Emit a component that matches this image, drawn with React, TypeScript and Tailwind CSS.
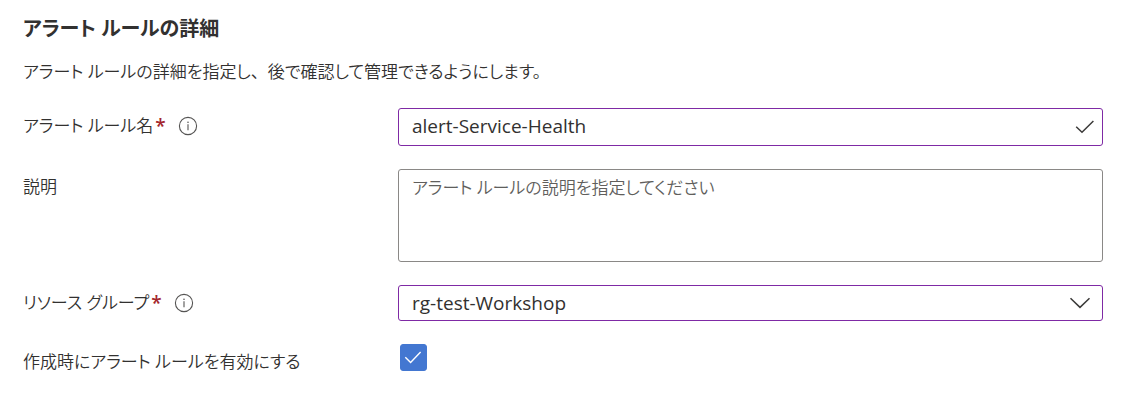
import { useState } from "react";

const labelClass = "flex h-7 items-center text-[17px] leading-7 font-[350]";

function Info({ label }: { label: string }) {
  return (
    <button type="button" aria-label={label} className="ml-3 text-[#555453]">
      <svg width="20" height="20" viewBox="0 0 20 20" fill="none" stroke="currentColor" className="block">
        <circle cx="10" cy="10" r="8.6" strokeWidth="1.1" />
        <path d="M10 8.2V14.2" strokeWidth="1.1" />
        <circle cx="10" cy="6.2" r="0.8" fill="currentColor" stroke="none" />
      </svg>
    </button>
  );
}

function Star() {
  return (
    <span aria-hidden="true" className="ml-0.5 font-['Open_Sans'] text-[19px] font-semibold text-[#a4262c]">
      *
    </span>
  );
}

export default function App() {
  const [name, setName] = useState("alert-Service-Health");
  const [description, setDescription] = useState("");
  const [enabled, setEnabled] = useState(true);

  return (
    <main className="bg-white px-[23px] pt-3 pb-6 font-['Open_Sans','Noto_Sans_CJK_JP',sans-serif] text-[#323130] [font-feature-settings:'palt']">
      <h1 className="text-[20px] leading-[34px] font-semibold">アラート ルールの詳細</h1>
      <p className="mt-2.5 text-[17px] leading-8 font-[350]">
        アラート ルールの詳細を指定し<span className="[font-feature-settings:normal]">、</span>後で確認して管理できるようにします。
      </p>
      <form className="mt-5 mr-[19px] grid grid-cols-[375px_1fr] items-start gap-y-[23px]">
        <div className={`${labelClass} mt-1`}>
          <label htmlFor="name">アラート ルール名</label>
          <Star />
          <Info label="アラート ルール名の情報" />
        </div>
        <div className="relative">
          <input
            id="name"
            value={name}
            onChange={(e) => setName(e.target.value)}
            className="block h-[38px] w-full rounded-[3px] border border-[#7f2aa5] pr-10 pb-0.5 pl-[13px] text-[19px] outline-none"
          />
          <svg
            width="20"
            height="14"
            viewBox="0 0 20 14"
            fill="none"
            stroke="#3b3a39"
            strokeWidth="1.5"
            className="pointer-events-none absolute top-3 right-2"
          >
            <path d="M1.2 6.8L7 12.2L18.4 1" />
          </svg>
        </div>

        <label htmlFor="desc" className={`${labelClass} mt-1`}>
          説明
        </label>
        <textarea
          id="desc"
          value={description}
          onChange={(e) => setDescription(e.target.value)}
          placeholder="アラート ルールの説明を指定してください"
          className="block h-[93px] w-full resize-none rounded-[3px] border border-[#8a8886] px-[13px] py-1 text-[17px] leading-7 font-[350] outline-none placeholder:text-[#605e5c]"
        />

        <div className={`${labelClass} mt-1`}>
          <label htmlFor="group">リソース グループ</label>
          <Star />
          <Info label="リソース グループの情報" />
        </div>
        <div className="relative">
          <select
            id="group"
            className="block h-9 w-full appearance-none rounded-[3px] border border-[#7f2aa5] bg-white pr-10 pl-[13px] text-[19px] outline-none"
          >
            <option>rg-test-Workshop</option>
          </select>
          <svg
            width="22"
            height="12"
            viewBox="0 0 22 12"
            fill="none"
            stroke="#3b3a39"
            strokeWidth="1.5"
            className="pointer-events-none absolute top-3 right-3"
          >
            <path d="M1.5 1.2L11 10.4L20.5 1.2" />
          </svg>
        </div>

        <label htmlFor="enabled" className={`${labelClass} mt-1`}>
          作成時にアラート ルールを有効にする
        </label>
        <div className="relative ml-0.5 size-[27px]">
          <input
            id="enabled"
            type="checkbox"
            checked={enabled}
            onChange={(e) => setEnabled(e.target.checked)}
            className="peer block size-full appearance-none rounded-[3px] border border-[#8a8886] checked:border-[#4377d1] checked:bg-[#4377d1]"
          />
          <svg
            viewBox="0 0 27 27"
            fill="none"
            stroke="white"
            strokeWidth="1.4"
            className="pointer-events-none absolute inset-0 hidden peer-checked:block"
          >
            <path d="M5.3 13.2L10.6 18.6L20.6 8" />
          </svg>
        </div>
      </form>
    </main>
  );
}
